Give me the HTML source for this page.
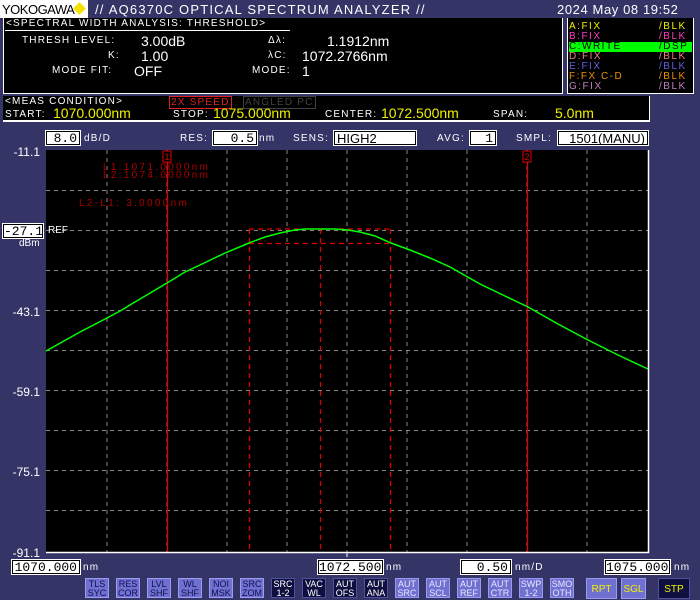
<!DOCTYPE html>
<html><head><meta charset="utf-8"><style>
*{margin:0;padding:0;box-sizing:border-box}
body{width:700px;height:600px;background:#343466;position:relative;overflow:hidden;font-family:"Liberation Sans",sans-serif;color:#fff}
.a{position:absolute;white-space:pre;line-height:1}
.m{font-family:"Liberation Sans",sans-serif;letter-spacing:1.2px}
.box{position:absolute;background:#fff;color:#000;border:1px solid #000;outline:1px solid #fff;text-align:right;font-size:13px;line-height:13px;padding-right:2px;font-family:"Liberation Mono",monospace}
.btn{position:absolute;top:578px;width:24px;height:20px;background:#7070d0;border:1px solid #9a9af0;color:#e8e8ff;font-size:9px;line-height:9px;text-align:center;padding-top:1px;letter-spacing:0}
.d{background:#101040;border-color:#5050a0;color:#fff}
.y{position:absolute;font-size:12px;right:660px}
.tr{position:absolute;left:569px;width:123px;height:10px;font-size:10px;line-height:10px;letter-spacing:1.5px}
.tr span{position:absolute;left:90px}
</style></head><body>
<div class="a" style="left:0;top:0;width:88px;height:18px;background:#fff"></div>
<div class="a" style="left:2px;top:3px;font-size:13px;color:#000;letter-spacing:-0.5px">YOKOGAWA</div>
<div class="a" style="left:75px;top:4px;width:9px;height:9px;background:#f6e000;transform:rotate(45deg)"></div>
<div class="a m" style="left:95px;top:3px;font-size:13px">// AQ6370C OPTICAL SPECTRUM ANALYZER //</div>
<div class="a m" style="left:557px;top:3px;font-size:13px;letter-spacing:0.6px">2024 May 08 19:52</div>
<div class="a" style="left:3px;top:18px;width:560px;height:76px;background:#000;border:1px solid #fff;border-top:none"></div>
<div class="a m" style="left:6px;top:19px;font-size:10px">&lt;SPECTRAL WIDTH ANALYSIS: THRESHOLD&gt;</div>
<div class="a" style="left:5px;top:30px;width:285px;height:1px;background:#fff"></div>
<div class="a m" style="left:22px;top:36px;font-size:10px">THRESH LEVEL:</div>
<div class="a" style="left:141px;top:34px;font-size:14px">3.00dB</div>
<div class="a m" style="left:108px;top:51px;font-size:10px">K:</div>
<div class="a" style="left:141px;top:49px;font-size:14px">1.00</div>
<div class="a m" style="left:52px;top:66px;font-size:10px">MODE FIT:</div>
<div class="a" style="left:134px;top:64px;font-size:14px">OFF</div>
<div class="a m" style="left:268px;top:36px;font-size:10px">Δλ:</div>
<div class="a" style="left:327px;top:34px;font-size:14px">1.1912nm</div>
<div class="a m" style="left:268px;top:51px;font-size:10px">λC:</div>
<div class="a" style="left:302px;top:49px;font-size:14px">1072.2766nm</div>
<div class="a m" style="left:252px;top:66px;font-size:10px">MODE:</div>
<div class="a" style="left:302px;top:64px;font-size:14px">1</div>
<div class="a" style="left:567px;top:18px;width:127px;height:76px;background:#000;border:1px solid #fff;border-top:none"></div>
<div class="tr" style="top:22px;color:#f0f000">A:FIX<span>/BLK</span></div>
<div class="tr" style="top:32px;color:#ff40c0">B:FIX<span>/BLK</span></div>
<div class="tr" style="top:42px;color:#000;background:#00ff00">C:WRITE<span>/DSP</span></div>
<div class="tr" style="top:52px;color:#f08080">D:FIX<span>/BLK</span></div>
<div class="tr" style="top:62px;color:#6060e0">E:FIX<span>/BLK</span></div>
<div class="tr" style="top:72px;color:#f09000">F:FX C-D<span>/BLK</span></div>
<div class="tr" style="top:82px;color:#c080c0">G:FIX<span>/BLK</span></div>
<div class="a" style="left:3px;top:96px;width:647px;height:26px;background:#000;border-bottom:2px solid #fff;border-right:1px solid #fff"></div>
<div class="a m" style="left:5px;top:97px;font-size:10px">&lt;MEAS CONDITION&gt;</div>
<div class="a m" style="left:169px;top:96px;font-size:10px;color:#e02020;border:1px solid #e02020;padding:1px 1px 0">2X SPEED</div>
<div class="a m" style="left:243px;top:96px;font-size:10px;color:#404040;border:1px solid #404040;padding:1px 1px 0">ANGLED PC</div>
<div class="a m" style="left:5px;top:110px;font-size:10px">START:</div>
<div class="a" style="left:53px;top:106px;font-size:14px;color:#f0f000">1070.000nm</div>
<div class="a m" style="left:173px;top:110px;font-size:10px">STOP:</div>
<div class="a" style="left:213px;top:106px;font-size:14px;color:#f0f000">1075.000nm</div>
<div class="a m" style="left:325px;top:110px;font-size:10px">CENTER:</div>
<div class="a" style="left:381px;top:106px;font-size:14px;color:#f0f000">1072.500nm</div>
<div class="a m" style="left:493px;top:110px;font-size:10px">SPAN:</div>
<div class="a" style="left:555px;top:106px;font-size:14px;color:#f0f000">5.0nm</div>
<div class="box" style="left:46px;top:131px;width:34px;height:14px">8.0</div>
<div class="a m" style="left:84px;top:134px;font-size:10px">dB/D</div>
<div class="a m" style="left:180px;top:134px;font-size:10px">RES:</div>
<div class="box" style="left:213px;top:131px;width:44px;height:14px">0.5</div>
<div class="a m" style="left:259px;top:134px;font-size:10px">nm</div>
<div class="a m" style="left:293px;top:134px;font-size:10px">SENS:</div>
<div class="box" style="left:334px;top:131px;width:82px;height:14px;text-align:left;padding-left:2px;font-family:'Liberation Sans',sans-serif">HIGH2</div>
<div class="a m" style="left:437px;top:134px;font-size:10px">AVG:</div>
<div class="box" style="left:470px;top:131px;width:26px;height:14px">1</div>
<div class="a m" style="left:516px;top:134px;font-size:10px">SMPL:</div>
<div class="box" style="left:558px;top:131px;width:90px;height:14px;font-family:'Liberation Sans',sans-serif">1501(MANU)</div>
<div class="y" style="top:145px">-11.1</div>
<div class="box" style="left:3px;top:224px;width:40px;height:14px">-27.1</div>
<div class="a" style="left:19px;top:239px;font-size:10px">dBm</div>
<div class="y" style="top:305px">-43.1</div>
<div class="y" style="top:385px">-59.1</div>
<div class="y" style="top:465px">-75.1</div>
<div class="y" style="top:546px">-91.1</div>
<svg class="a" style="left:0;top:0" width="700" height="600">
<rect x="46" y="150" width="602" height="402" fill="#000"/>
<g stroke="#888" stroke-width="1" stroke-dasharray="4,4">
<path d="M107 150V552M167 150V552M227 150V552M287 150V552M347 150V552M407 150V552M467 150V552M527 150V552M587 150V552"/>
<path d="M46 190.5H648M46 230.5H648M46 270.5H648M46 310.5H648M46 350.5H648M46 390.5H648M46 430.5H648M46 470.5H648M46 510.5H648"/>
</g>
<g stroke="#e00000" fill="none" stroke-width="1.3">
<path d="M167.5 158V552M527.5 158V552"/>
<path stroke-dasharray="5,4" d="M249 229H391M249 243.5H391M249.5 229V552M390.5 229V552M320.5 229V552"/>
</g>
<rect x="163" y="151" width="8" height="11" fill="#000" stroke="#e00000"/>
<text x="164.5" y="160" fill="#e00000" font-size="9" font-family="Liberation Sans">1</text>
<rect x="523" y="151" width="8" height="11" fill="#000" stroke="#e00000"/>
<text x="524.5" y="160" fill="#e00000" font-size="9" font-family="Liberation Sans">2</text>
<g fill="#b00000" font-size="10" font-family="Liberation Sans" letter-spacing="2.3">
<text x="103" y="170">L1:1071.0000nm</text>
<text x="103" y="178">L2:1074.0000nm</text>
<text x="79" y="206">L2-L1:    3.0000nm</text>
</g>
<polyline fill="none" stroke="#00ff00" stroke-width="1.5" points="46,351 80,332 107,318 120,311 140,299 167,283 185,272 200,265 225,253 249,243 265,237 280,233 295,230 305,229 335,229 348,230 360,232 375,236 391,243 410,250 430,258 450,267 480,284 505,296 528,307 558,324 588,340 618,355 648,369"/>
<text x="48" y="233" fill="#fff" font-size="10" font-family="Liberation Sans">REF</text>
<path d="M46 552.5H648.5V150" stroke="#fff" stroke-width="1.5" fill="none"/>
<path d="M347 552V557" stroke="#fff"/>
</svg>
<div class="box" style="left:12px;top:560px;width:68px;height:14px">1070.000</div>
<div class="a m" style="left:83px;top:563px;font-size:10px">nm</div>
<div class="box" style="left:318px;top:560px;width:65px;height:14px">1072.500</div>
<div class="a m" style="left:386px;top:563px;font-size:10px">nm</div>
<div class="box" style="left:461px;top:560px;width:50px;height:14px">0.50</div>
<div class="a m" style="left:515px;top:563px;font-size:10px">nm/D</div>
<div class="box" style="left:605px;top:560px;width:65px;height:14px">1075.000</div>
<div class="a m" style="left:674px;top:563px;font-size:10px">nm</div>
<div class="btn" style="left:85px;color:#101050">TLS<br>SYC</div>
<div class="btn" style="left:116px;color:#101050">RES<br>COR</div>
<div class="btn" style="left:147px;color:#101050">LVL<br>SHF</div>
<div class="btn" style="left:178px;color:#101050">WL<br>SHF</div>
<div class="btn" style="left:209px;color:#101050">NOI<br>MSK</div>
<div class="btn" style="left:240px;color:#101050">SRC<br>ZOM</div>
<div class="btn d" style="left:271px">SRC<br>1-2</div>
<div class="btn d" style="left:302px">VAC<br>WL</div>
<div class="btn d" style="left:333px">AUT<br>OFS</div>
<div class="btn d" style="left:364px">AUT<br>ANA</div>
<div class="btn" style="left:395px">AUT<br>SRC</div>
<div class="btn" style="left:426px">AUT<br>SCL</div>
<div class="btn" style="left:457px">AUT<br>REF</div>
<div class="btn" style="left:488px">AUT<br>CTR</div>
<div class="btn" style="left:519px">SWP<br>1-2</div>
<div class="btn" style="left:550px">SMO<br>OTH</div>
<div class="btn" style="left:586px;width:31px;height:21px;color:#f0f000;font-size:10px;line-height:19px">RPT</div>
<div class="btn" style="left:621px;width:25px;height:21px;color:#f0f000;font-size:10px;line-height:19px">SGL</div>
<div class="btn d" style="left:658px;width:32px;height:21px;color:#f0f000;font-size:10px;line-height:19px">STP</div>
</body></html>
